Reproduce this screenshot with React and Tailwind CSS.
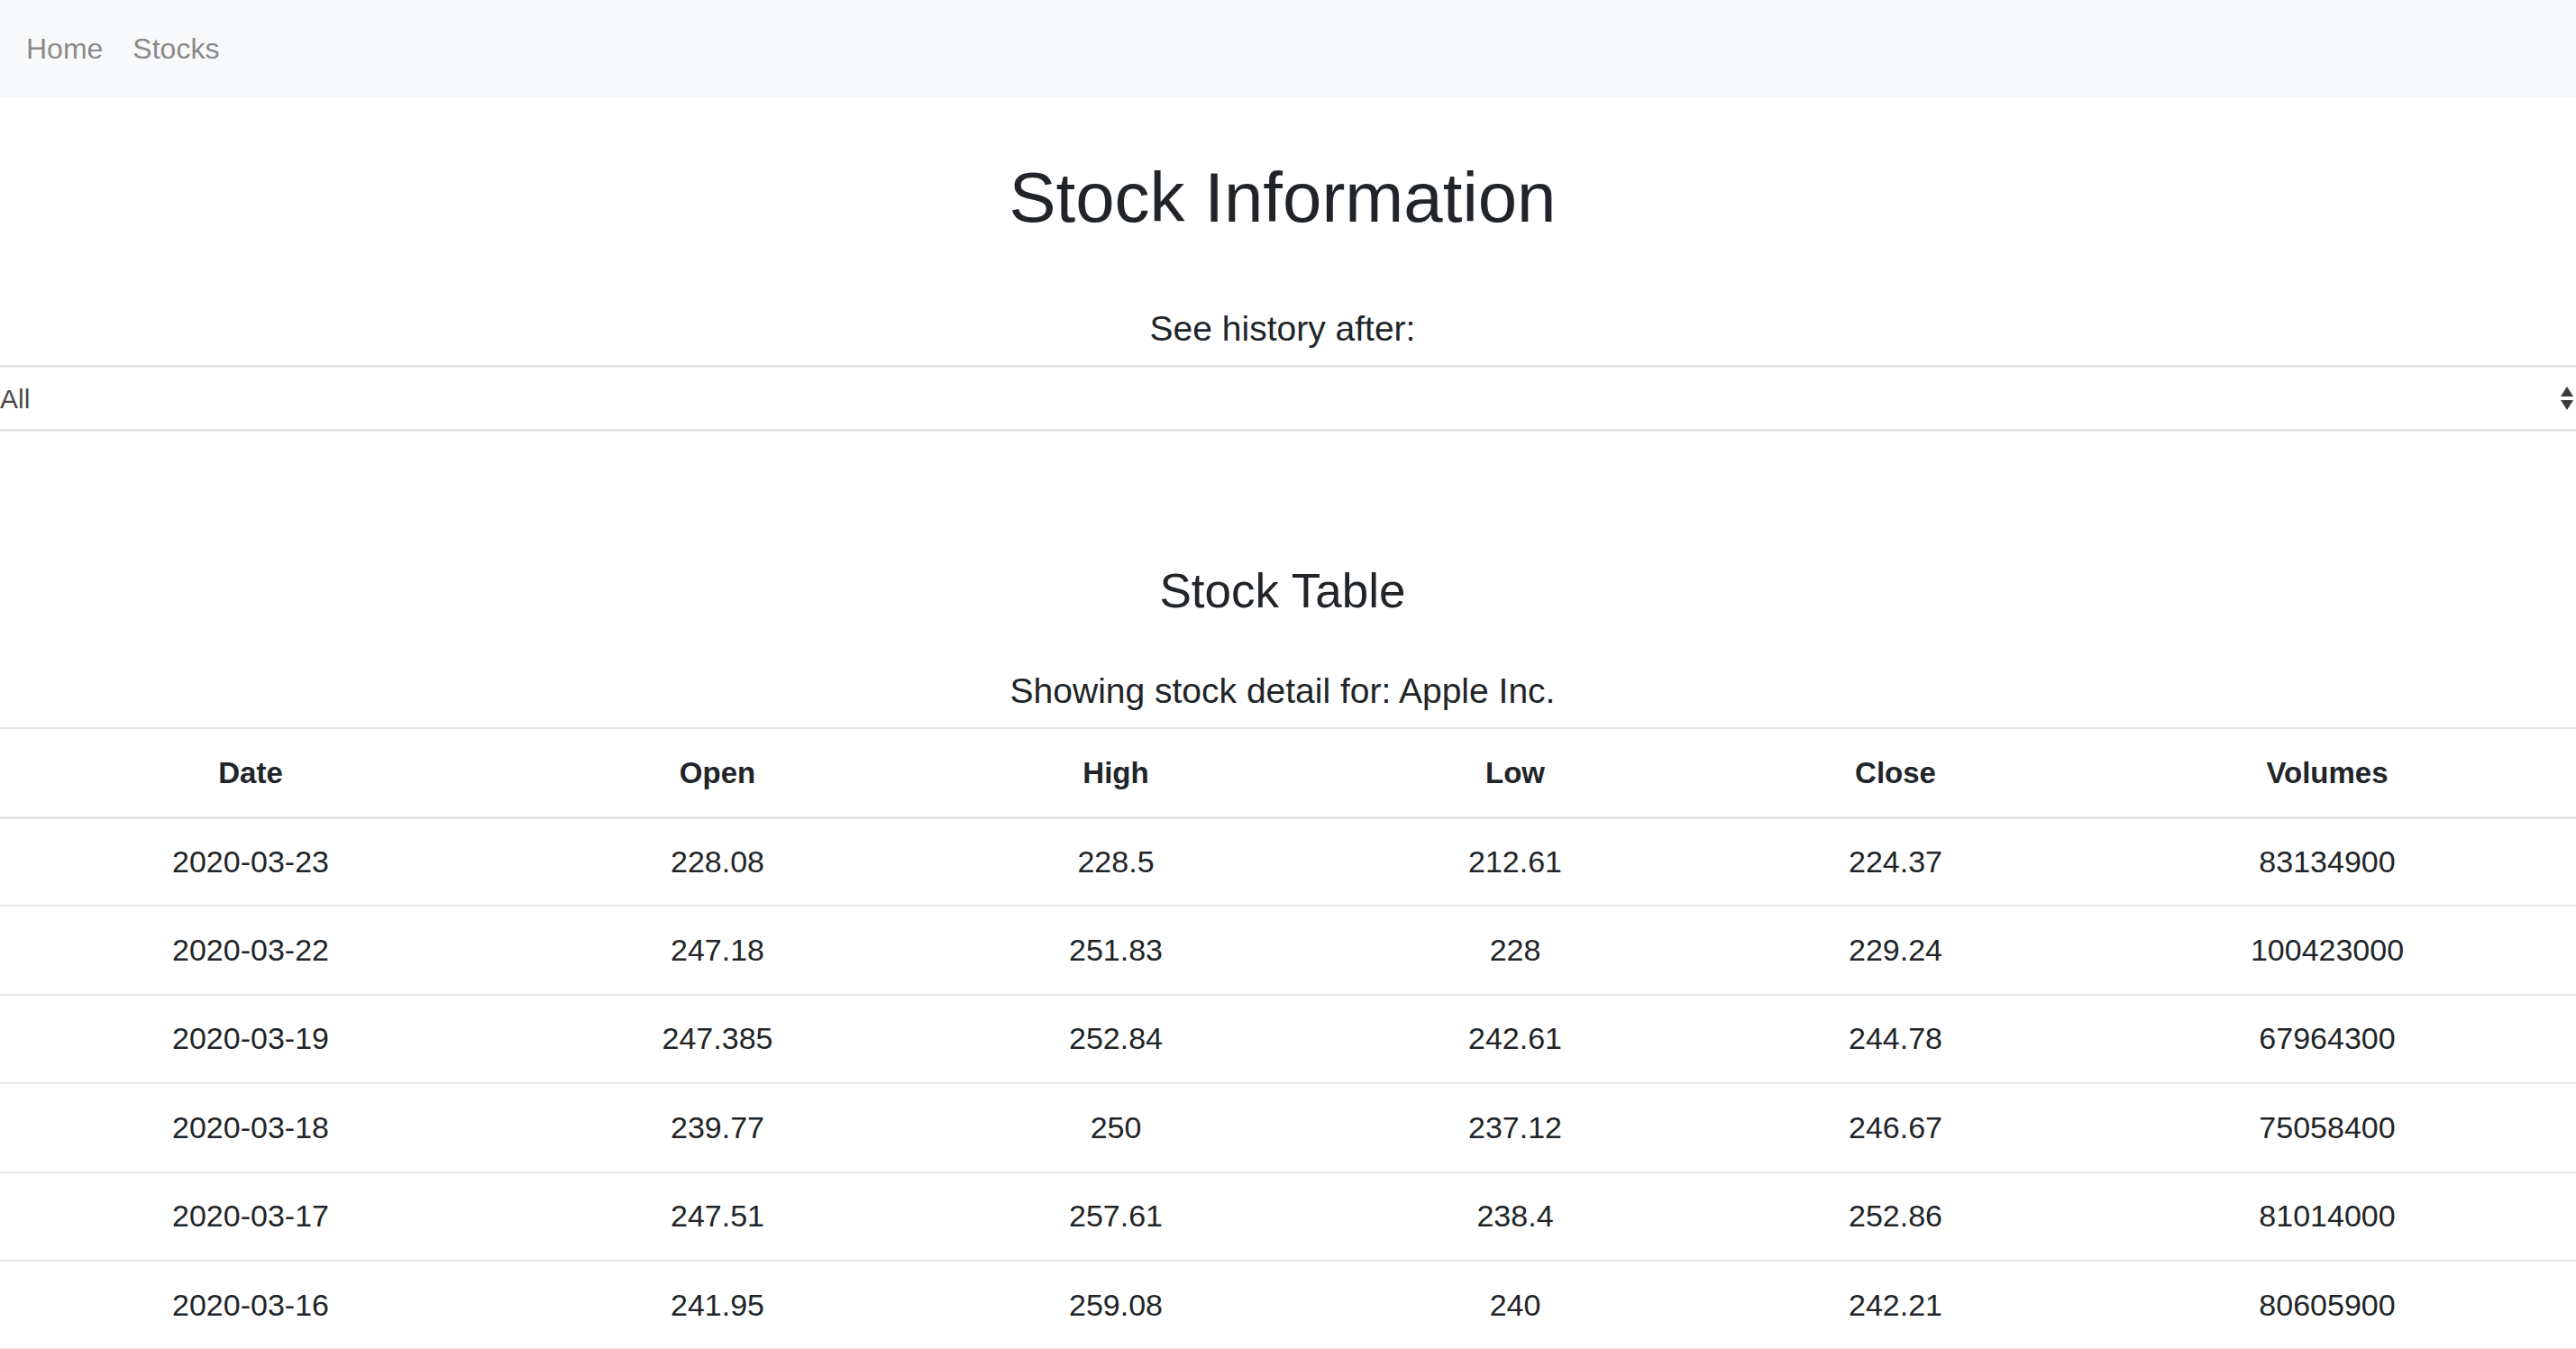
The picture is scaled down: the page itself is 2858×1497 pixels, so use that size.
import React from 'react';

const ROWS = [
  ['2020-03-23', '228.08', '228.5', '212.61', '224.37', '83134900'],
  ['2020-03-22', '247.18', '251.83', '228', '229.24', '100423000'],
  ['2020-03-19', '247.385', '252.84', '242.61', '244.78', '67964300'],
  ['2020-03-18', '239.77', '250', '237.12', '246.67', '75058400'],
  ['2020-03-17', '247.51', '257.61', '238.4', '252.86', '81014000'],
  ['2020-03-16', '241.95', '259.08', '240', '242.21', '80605900'],
];

const HEADERS = ['Date', 'Open', 'High', 'Low', 'Close', 'Volumes'];
const WIDTHS = ['w-[556px]', 'w-[480px]', 'w-[404px]', 'w-[482px]', 'w-[362px]', 'w-[596px]'];

const SelectArrows = () => (
  <svg width="16" height="28" viewBox="0 0 16 28" className="shrink-0">
    <path d="M8 1 L15 12 L1 12 Z" fill="#3a3a3a" />
    <path d="M1 16 L15 16 L8 27 Z" fill="#3a3a3a" />
  </svg>
);

const App = () => {
  return (
    <div className="min-h-screen bg-white text-[#212529] font-['Liberation_Sans',Arial,sans-serif] overflow-hidden">
      {/* Navbar */}
      <nav className="h-[108px] bg-[#f8f9fa] flex items-center gap-[33px] px-[29px] text-[32px] text-[#8a8a8a]">
        <span>Home</span>
        <span>Stocks</span>
      </nav>

      <div className="flex flex-col items-center pr-[12px]">
        <h1 className="mt-[63px] text-[78px] leading-[96px] font-normal">Stock Information</h1>
        <p className="mt-[74px] text-[39px] leading-[48px]">See history after:</p>
      </div>

      {/* Select */}
      <div className="mt-[16px] h-[74px] border-y-[3px] border-[#e4e4e4] flex items-center justify-between pr-[2px]">
        <span className="text-[30px] text-[#4a4a4a]">All</span>
        <SelectArrows />
      </div>

      <div className="flex flex-col items-center pr-[12px]">
        <h3 className="mt-[145px] text-[53px] leading-[64px] font-normal">Stock Table</h3>
        <p className="mt-[55px] text-[39px] leading-[48px]">Showing stock detail for: Apple Inc.</p>
      </div>

      {/* Table */}
      <table className="mt-[16px] w-[2880px] table-fixed border-collapse text-[34px]">
        <colgroup>
          {WIDTHS.map((w, i) => (
            <col key={i} className={w} />
          ))}
        </colgroup>
        <thead>
          <tr className="border-t-2 border-b-[3px] border-[#e2e2e2] h-[99px] text-[33px]">
            {HEADERS.map((h) => (
              <th key={h} className="font-bold text-center align-middle">{h}</th>
            ))}
          </tr>
        </thead>
        <tbody>
          {ROWS.map((row) => (
            <tr key={row[0]} className="border-b-2 border-[#e6e6e6] h-[98.4px]">
              {row.map((cell, i) => (
                <td key={i} className="text-center align-middle">{cell}</td>
              ))}
            </tr>
          ))}
        </tbody>
      </table>
    </div>
  );
};

export default App;
